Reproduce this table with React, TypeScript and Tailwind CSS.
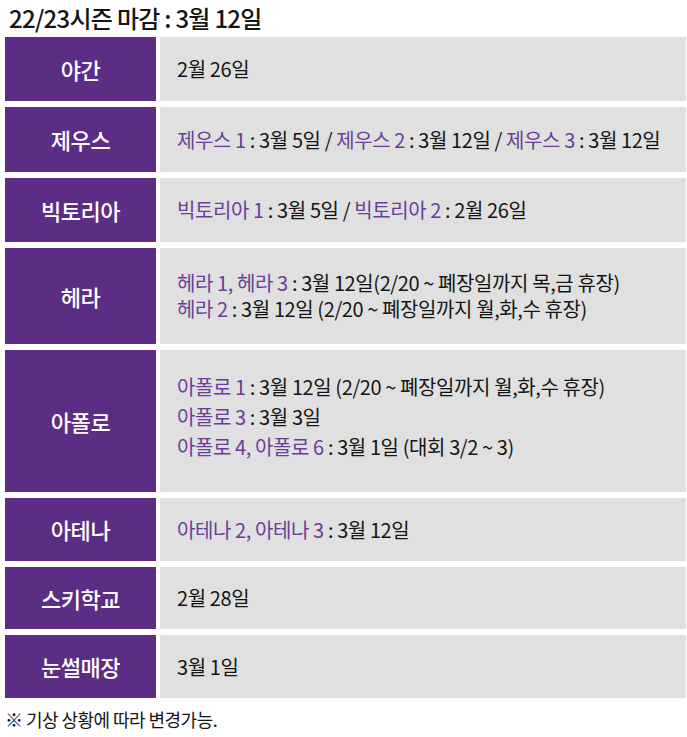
import React from "react";

type Part = { t: string; p?: boolean };
type Row = { label: string; h: string; lines: Part[][]; leading?: string; pad?: string };

const rows: Row[] = [
  { label: "야간", h: "h-[64px]", lines: [[{ t: "2월 26일" }]] },
  {
    label: "제우스",
    h: "h-[65px]",
    lines: [
      [
        { t: "제우스 1", p: true },
        { t: " : 3월 5일 / " },
        { t: "제우스 2", p: true },
        { t: " : 3월 12일 / " },
        { t: "제우스 3", p: true },
        { t: " : 3월 12일" },
      ],
    ],
  },
  {
    label: "빅토리아",
    h: "h-[64px]",
    lines: [
      [
        { t: "빅토리아 1", p: true },
        { t: " : 3월 5일 / " },
        { t: "빅토리아 2", p: true },
        { t: " : 2월 26일" },
      ],
    ],
  },
  {
    label: "헤라",
    h: "h-[96px]",
    leading: "leading-[26px]",
    lines: [
      [{ t: "헤라 1, 헤라 3", p: true }, { t: " : 3월 12일(2/20 ~ 폐장일까지 목,금 휴장)" }],
      [{ t: "헤라 2", p: true }, { t: " : 3월 12일 (2/20 ~ 폐장일까지 월,화,수 휴장)" }],
    ],
  },
  {
    label: "아폴로",
    h: "h-[142px]",
    leading: "leading-[30px]",
    pad: "pb-[9px]",
    lines: [
      [{ t: "아폴로 1", p: true }, { t: " : 3월 12일 (2/20 ~ 폐장일까지 월,화,수 휴장)" }],
      [{ t: "아폴로 3", p: true }, { t: " : 3월 3일" }],
      [{ t: "아폴로 4, 아폴로 6", p: true }, { t: " : 3월 1일 (대회 3/2 ~ 3)" }],
    ],
  },
  {
    label: "아테나",
    h: "h-[63px]",
    lines: [[{ t: "아테나 2, 아테나 3", p: true }, { t: " : 3월 12일" }]],
  },
  { label: "스키학교", h: "h-[62px]", lines: [[{ t: "2월 28일" }]] },
  { label: "눈썰매장", h: "h-[63px]", lines: [[{ t: "3월 1일" }]] },
];

export default function App() {
  return (
    <div
      className="w-[687px] h-[737px] bg-white text-[#151515]"
      style={{ fontFamily: '"Noto Sans CJK KR", "Noto Sans", sans-serif' }}
    >
      {/* title */}
      <div className="h-[37px] pl-[9px] pt-[2px] text-[24px] leading-[32px] tracking-[-0.03em] font-medium">
        22/23시즌 마감 : 3월 12일
      </div>

      <div className="flex flex-col gap-[6px] pl-[5px]">
        {rows.map((r) => (
          <div key={r.label} className={`flex gap-[4px] ${r.h}`}>
            <div className="w-[151px] shrink-0 bg-[#5b2d85] flex items-center justify-center text-white text-[22px] font-medium tracking-[-0.02em]">
              {r.label}
            </div>
            <div
              className={`w-[526px] bg-[#e0e0e0] flex flex-col justify-center pl-[17px] text-[20px] tracking-[-0.02em] ${
                r.leading ?? "leading-[28px]"
              } ${r.pad ?? ""}`}
            >
              {r.lines.map((line, i) => (
                <div key={i} className="whitespace-pre">
                  {line.map((part, j) => (
                    <span key={j} className={part.p ? "text-[#6b3d9a]" : ""}>
                      {part.t}
                    </span>
                  ))}
                </div>
              ))}
            </div>
          </div>
        ))}
      </div>

      {/* footer note */}
      <div className="pl-[5px] pt-[8px] text-[18px] leading-[26px] tracking-[-0.03em]">
        ※ 기상 상황에 따라 변경가능.
      </div>
    </div>
  );
}
